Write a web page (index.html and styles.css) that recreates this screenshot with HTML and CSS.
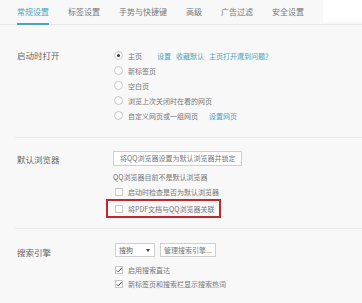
FILE: index.html
```html
<!DOCTYPE html>
<html lang="zh-CN">
<head>
  <meta charset="UTF-8" />
  <title>设置</title>
  <link rel="stylesheet" href="styles.css">
</head>
<body>

  <div class="tabs">
    <a class="tab active">常规设置</a>
    <a class="tab">标签设置</a>
    <a class="tab">手势与快捷键</a>
    <a class="tab">高级</a>
    <a class="tab">广告过滤</a>
    <a class="tab">安全设置</a>
    <div class="search"></div>
  </div>

  <!-- 启动时打开 -->
  <div class="group startup">
    <div class="label">启动时打开</div>
    <div class="options">
      <div class="row"><span class="radio checked"></span>主页<a class="link first">设置</a><a class="link">收藏默认</a><a class="link">主页打开遭到问题？</a></div>
      <div class="row"><span class="radio"></span>新标签页</div>
      <div class="row"><span class="radio"></span>空白页</div>
      <div class="row"><span class="radio"></span>浏览上次关闭时在看的网页</div>
      <div class="row"><span class="radio"></span>自定义网页或一组网页<a class="link wide">设置网页</a></div>
    </div>
  </div>
  <div class="divider"></div>

  <!-- 默认浏览器 -->
  <div class="group browser">
    <div class="label">默认浏览器</div>
    <div class="options">
      <button class="btn">将QQ浏览器设置为默认浏览器并锁定</button>
      <div class="row note">QQ浏览器目前不是默认浏览器</div>
      <div class="row"><span class="check"></span>启动时检查是否为默认浏览器</div>
      <div class="highlight">
        <div class="row"><span class="check"></span>将PDF文档与QQ浏览器关联</div>
      </div>
    </div>
  </div>
  <div class="divider"></div>

  <!-- 搜索引擎 -->
  <div class="group search-engine">
    <div class="label">搜索引擎</div>
    <div class="options">
      <div class="select-row">
        <div class="select">搜狗<span class="arrow"></span></div>
        <button class="btn small">管理搜索引擎...</button>
      </div>
      <div class="row tight"><span class="check on"><svg viewBox="0 0 8 8"><path d="M1.5 4.2 L3.3 6 L6.7 1.8" fill="none" stroke="#555" stroke-width="1"/></svg></span>启用搜索直达</div>
      <div class="row tight"><span class="check on"><svg viewBox="0 0 8 8"><path d="M1.5 4.2 L3.3 6 L6.7 1.8" fill="none" stroke="#555" stroke-width="1"/></svg></span>新标签页和搜索栏显示搜索热词</div>
    </div>
  </div>

</body>
</html>
```

FILE: styles.css
```css
body {
  margin: 0;
  width: 362px;
  height: 303px;
  overflow: hidden;
  background: #f8f8f8;
  font-family: "Noto Sans CJK SC", "Noto Sans", sans-serif;
  color: #555;
}

a {
  cursor: pointer;
}

/* Tabs */
.tabs {
  display: flex;
  height: 24px;
  padding-left: 17px;
  gap: 19px;
  border-bottom: 1px solid #e6e6e6;
}

.tab {
  flex-shrink: 0;
  white-space: nowrap;
  font-size: 8px;
  line-height: 24px;
  color: #777;
}

.tab.active {
  color: #45a6c1;
  height: 23px;
  border-bottom: 2px solid #45a6c1;
  margin-bottom: -1px;
}

.search {
  margin-left: auto;
  width: 45px;
  flex-shrink: 0;
  height: 22px;
  background: #fff;
}

/* Groups */
.group {
  display: flex;
  padding-left: 17px;
}

.label {
  width: 96px;
  flex-shrink: 0;
  font-size: 8.5px;
  line-height: 15px;
  color: #666;
}

.options {
  display: flex;
  flex-direction: column;
  align-items: flex-start;
}

.row {
  display: flex;
  align-items: center;
  height: 15px;
  font-size: 7px;
  color: #777;
  white-space: nowrap;
}

.link {
  color: #45a6c1;
  margin-left: 5px;
}

.link.first {
  margin-left: 15px;
}

.link.wide {
  margin-left: 11px;
}

.radio {
  width: 9px;
  height: 9px;
  box-sizing: border-box;
  border: 1px solid #c8c8c8;
  border-radius: 50%;
  background: #fff;
  margin-left: 0.5px;
  margin-right: 5.5px;
  display: flex;
  align-items: center;
  justify-content: center;
}

.radio.checked::after {
  content: "";
  width: 3px;
  height: 3px;
  border-radius: 50%;
  background: #333;
}

.check {
  width: 8px;
  height: 8px;
  box-sizing: border-box;
  border: 1px solid #c8c8c8;
  background: #fff;
  margin-left: 2px;
  margin-right: 5px;
  display: flex;
}

.check svg {
  width: 8px;
  height: 8px;
  margin: -1px;
}

.divider {
  height: 1px;
  margin-left: 15px;
  background: #e8e8e8;
}

/* 启动时打开 */
.startup {
  padding-top: 23px;
  padding-bottom: 14px;
}

/* 默认浏览器 */
.browser {
  padding-top: 13px;
  padding-bottom: 10px;
}

.browser .label {
  padding-top: 1px;
}

.btn {
  height: 15px;
  box-sizing: border-box;
  border: 1px solid #cfcfcf;
  background: #fff;
  font-family: inherit;
  font-size: 7px;
  color: #777;
  padding: 0 6px;
  margin: 0;
  line-height: 13px;
}

.note {
  margin-top: 3px;
}

.highlight {
  margin-left: -7px;
  width: 115px;
  box-sizing: border-box;
  border: 2px solid #c1272d;
  padding-left: 5px;
}

/* 搜索引擎 */
.search-engine {
  padding-top: 14px;
}

.search-engine .label {
  line-height: 14px;
  padding-top: 2px;
}

.select-row {
  display: flex;
  gap: 5px;
  margin-left: 2px;
  margin-bottom: 6px;
}

.select {
  width: 40px;
  height: 14px;
  box-sizing: border-box;
  border: 1px solid #cfcfcf;
  background: #fff;
  font-size: 7px;
  line-height: 12px;
  color: #666;
  padding-left: 3px;
  display: flex;
  align-items: center;
}

.arrow {
  margin-left: auto;
  margin-right: 4px;
  width: 0;
  height: 0;
  border-left: 2.5px solid transparent;
  border-right: 2.5px solid transparent;
  border-top: 3px solid #444;
}

.btn.small {
  height: 14px;
  padding: 0 3px;
  line-height: 12px;
}

.row.tight {
  height: 14px;
}
```
